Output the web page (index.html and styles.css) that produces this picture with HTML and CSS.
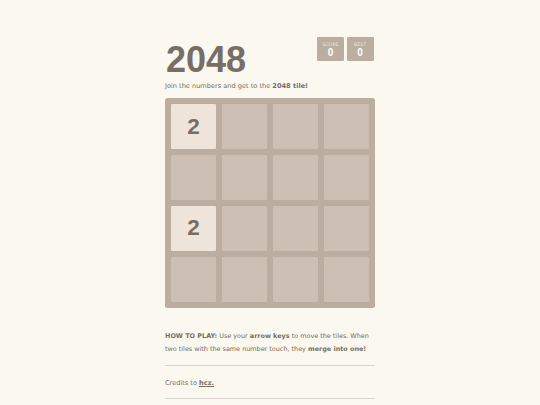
FILE: index.html
```html
<!DOCTYPE html>
<html>
<head>
<meta charset="utf-8">
<link rel="stylesheet" href="styles.css">
</head>
<body>
<div class="container">
  <div class="heading">
    <h1 class="title">2048</h1>
    <div class="scores">
      <div class="score-box"><span class="label">SCORE</span><span class="value">0</span></div>
      <div class="score-box"><span class="label">BEST</span><span class="value">0</span></div>
    </div>
  </div>
  <p class="intro">Join the numbers and get to the <strong>2048 tile!</strong></p>
  <div class="grid">
    <div class="cell tile">2</div><div class="cell"></div><div class="cell"></div><div class="cell"></div>
    <div class="cell"></div><div class="cell"></div><div class="cell"></div><div class="cell"></div>
    <div class="cell tile">2</div><div class="cell"></div><div class="cell"></div><div class="cell"></div>
    <div class="cell"></div><div class="cell"></div><div class="cell"></div><div class="cell"></div>
  </div>
  <p class="explanation"><strong>HOW TO PLAY:</strong> Use your <strong>arrow keys</strong> to move the tiles. When two tiles with the same number touch, they <strong>merge into one!</strong></p>
  <hr class="rule">
  <p class="credits">Credits to <a class="link" href="#">hcz.</a></p>
  <hr class="rule">
</div>
</body>
</html>
```

FILE: styles.css
```css
html, body {
  margin: 0;
  padding: 0;
}
body {
  background: #faf8ef;
  color: #776e65;
  font-family: "DejaVu Sans", sans-serif;
  font-size: 6.6px;
}
.container {
  width: 210px;
  margin: 0 auto;
}
.heading {
  display: flex;
  justify-content: space-between;
  align-items: flex-start;
  padding-top: 37px;
}
.title {
  margin: 5px 0 0 1px;
  font-family: "Liberation Sans", Arial, sans-serif;
  font-size: 36px;
  line-height: 36px;
  font-weight: bold;
  color: #776e65;
}
.scores {
  display: flex;
  gap: 2.5px;
  margin-right: 1.5px;
}
.score-box {
  width: 27px;
  height: 24px;
  background: #bbada0;
  border-radius: 1.3px;
  display: flex;
  flex-direction: column;
  align-items: center;
  justify-content: flex-start;
  padding-top: 5px;
  box-sizing: border-box;
}
.label {
  font-size: 4.8px;
  line-height: 6px;
  color: #eee4da;
}
.value {
  font-family: "Liberation Sans", Arial, sans-serif;
  font-size: 10px;
  line-height: 10px;
  font-weight: bold;
  color: #ffffff;
}
.intro {
  margin: 2px 0 0;
  line-height: 13px;
}
strong {
  font-weight: bold;
}
.grid {
  margin-top: 5px;
  width: 210px;
  height: 210px;
  box-sizing: border-box;
  padding: 6.3px;
  background: #bbada0;
  border-radius: 2.5px;
  display: grid;
  grid-template-columns: repeat(4, 1fr);
  grid-template-rows: repeat(4, 1fr);
  gap: 6.3px;
}
.cell {
  background: rgba(238, 228, 218, 0.35);
  border-radius: 1.3px;
  display: flex;
  align-items: center;
  justify-content: center;
}
.tile {
  background: #eee4da;
  color: #776e65;
  font-family: "Liberation Sans", Arial, sans-serif;
  font-size: 22.5px;
  font-weight: bold;
}
.explanation {
  margin: 21.5px 0 0;
  font-size: 6.45px;
  line-height: 13px;
}
.rule {
  border: none;
  border-top: 1px solid #d8d4d0;
  margin: 9px 0 11px;
  height: 0;
}
.credits {
  margin: 0;
  line-height: 13px;
}
.credits + .rule {
  margin-top: 8.5px;
}
.link {
  color: #776e65;
  font-weight: bold;
  text-decoration: underline;
}
```
